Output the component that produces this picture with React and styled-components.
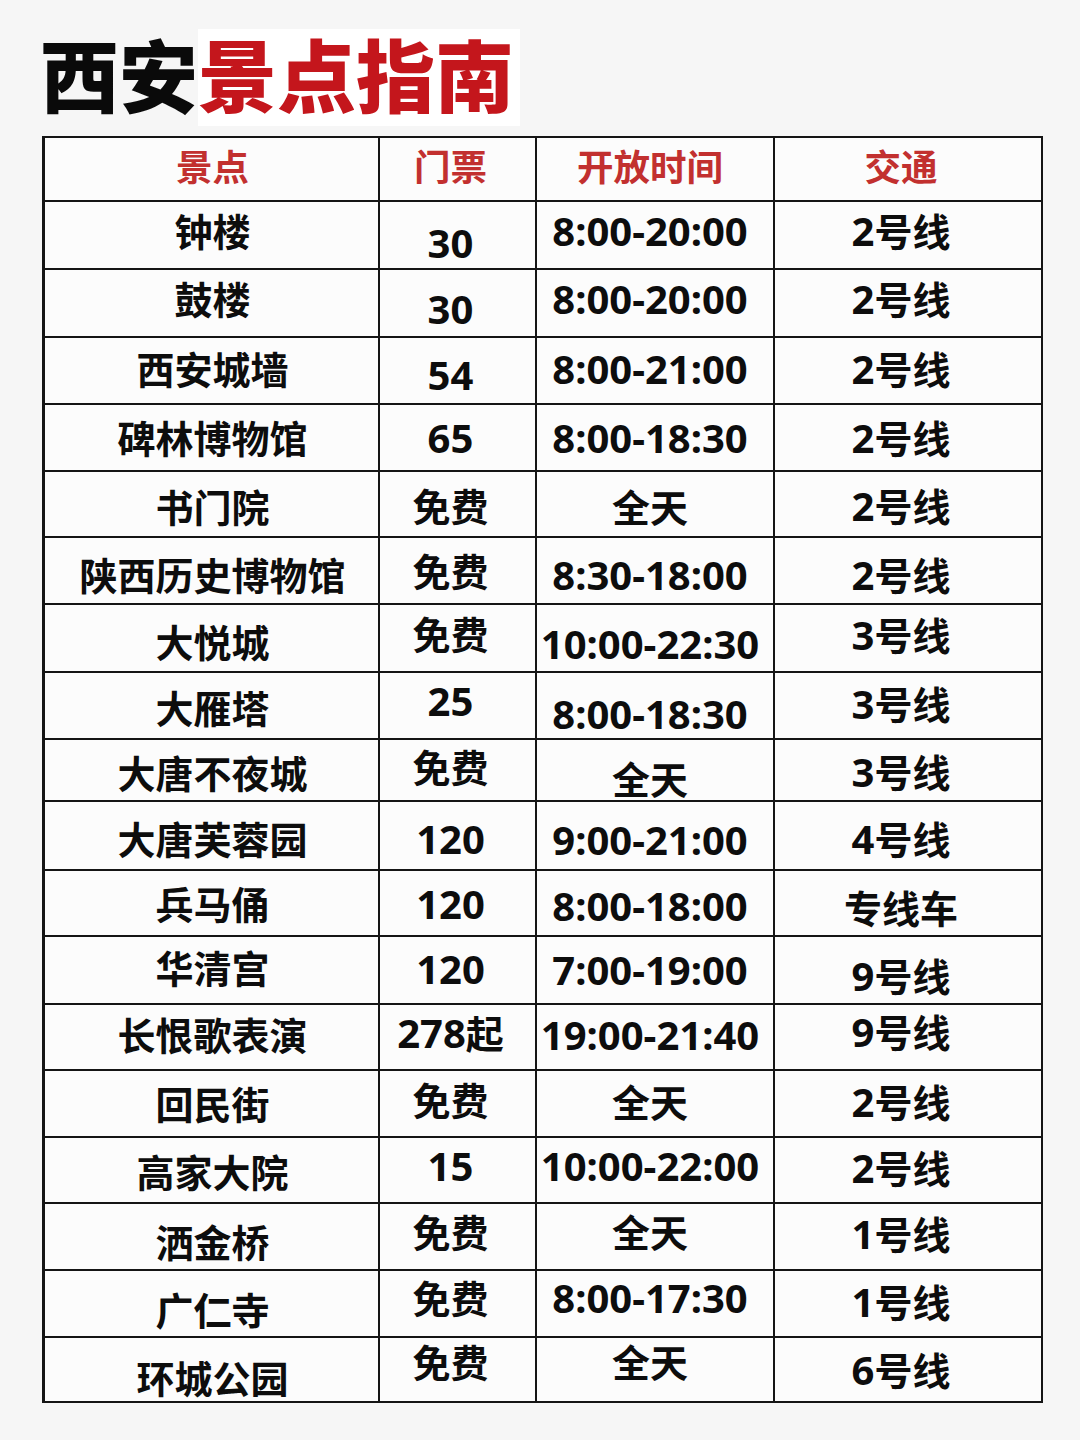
import React from "react";
import styled, { createGlobalStyle } from "styled-components";

const GlobalStyle = createGlobalStyle`
  html, body {
    margin: 0;
    padding: 0;
    background: #f6f6f6;
  }
  body {
    font-family: "Noto Sans", "Noto Sans CJK SC", sans-serif;
  }
`;

const Page = styled.div`
  width: 1080px;
  min-height: 1440px;
  padding: 33px 0 0 40px;
  box-sizing: border-box;
`;

const Title = styled.h1`
  margin: 0;
  height: 103px;
  font-family: "Noto Sans CJK SC", sans-serif;
  font-size: 79px;
  font-weight: 900;
  line-height: 1;
  color: #0a0a0a;
`;

const Red = styled.span`
  display: inline-block;
  color: #c4161c;
  background: #ffffff;
  padding: 4px 6px 14px 0;
  margin-top: -4px;
`;

const Table = styled.div`
  width: 1001px;
  margin-left: 2px;
  border-top: 2px solid #151515;
  border-left: 3px solid #151515;
  box-sizing: border-box;
`;

const Row = styled.div`
  display: grid;
  grid-template-columns: 335px 157px 238px 268px;
  height: ${(p) => p.$h}px;
  box-sizing: border-box;
  border-bottom: 2px solid #151515;
`;

const Cell = styled.div`
  display: flex;
  align-items: center;
  justify-content: center;
  border-right: 2px solid #151515;
  background: #fcfcfc;
`;

const Text = styled.span`
  display: block;
  font-family: "Noto Sans", "Noto Sans CJK SC", sans-serif;
  font-size: 38px;
  font-weight: 700;
  line-height: 1;
  color: #0d0d0d;
  white-space: nowrap;
  transform: translate(${(p) => p.$dx || 0}px, ${(p) => p.$dy || 0}px);
`;

const Latin = styled.span`
  font-size: 40px;
  line-height: 1;
`;

const HeadText = styled(Text)`
  font-family: "Noto Sans CJK SC", sans-serif;
  font-size: 36.5px;
  color: #c2302f;
`;

const head = ["景点", "门票", "开放时间", "交通"];

// [name, dy], [price, dy], [time, dy], [line, dy], row height
const rows = [
  [["钟楼", -4], ["30", 8], ["8:00-20:00", -4], ["2号线", -4], 68],
  [["鼓楼", -4], ["30", 6], ["8:00-20:00", -4], ["2号线", -4], 68],
  [["西安城墙", -2], ["54", 4], ["8:00-21:00", -2], ["2号线", -2], 67],
  [["碑林博物馆", 0], ["65", 0], ["8:00-18:30", 0], ["2号线", 0], 67],
  [["书门院", 3], ["免费", 2], ["全天", 3], ["2号线", 2], 66],
  [["陕西历史博物馆", 4], ["免费", 0], ["8:30-18:00", 4], ["2号线", 4], 67],
  [["大悦城", 4], ["免费", -4], ["10:00-22:30", 6], ["3号线", -3], 68],
  [["大雁塔", 2], ["25", -5], ["8:00-18:30", 8], ["3号线", -2], 67],
  [["大唐不夜城", 3], ["免费", -3], ["全天", 9], ["3号线", 2], 62],
  [["大唐芙蓉园", 3], ["120", 3], ["9:00-21:00", 4], ["4号线", 3], 69],
  [["兵马俑", 1], ["120", 1], ["8:00-18:00", 3], ["专线车", 5], 66],
  [["华清宫", -2], ["120", -1], ["7:00-19:00", 0], ["9号线", 6], 68],
  [["长恨歌表演", -2], ["278起", -4], ["19:00-21:40", -2], ["9号线", -5], 66],
  [["回民街", 0], ["免费", -4], ["全天", -2], ["2号线", -2], 67],
  [["高家大院", 2], ["15", -4], ["10:00-22:00", -4], ["2号线", -2], 66],
  [["洒金桥", 5], ["免费", -5], ["全天", -5], ["1号线", -3], 67],
  [["广仁寺", 6], ["免费", -6], ["8:00-17:30", -6], ["1号线", -2], 67],
  [["环城公园", 8], ["免费", -8], ["全天", -8], ["6号线", 0], 65],
];

const dxByCol = [1, -7, -5, -7];

const withLatin = (t) =>
  t.split(/([0-9:\-]+)/).map((part, i) =>
    /[0-9]/.test(part) ? <Latin key={i}>{part}</Latin> : part
  );

export default function App() {
  return (
    <>
      <GlobalStyle />
      <Page>
        <Title>
          西安<Red>景点指南</Red>
        </Title>
        <Table>
          <Row $h={64}>
            {head.map((h, i) => (
              <Cell key={h}>
                <HeadText $dx={dxByCol[i]} $dy={-3}>
                  {h}
                </HeadText>
              </Cell>
            ))}
          </Row>
          {rows.map((r) => (
            <Row key={r[0][0]} $h={r[4]}>
              {r.slice(0, 4).map(([t, dy], i) => (
                <Cell key={i}>
                  <Text $dy={dy} $dx={dxByCol[i]}>
                    {withLatin(t)}
                  </Text>
                </Cell>
              ))}
            </Row>
          ))}
        </Table>
      </Page>
    </>
  );
}
